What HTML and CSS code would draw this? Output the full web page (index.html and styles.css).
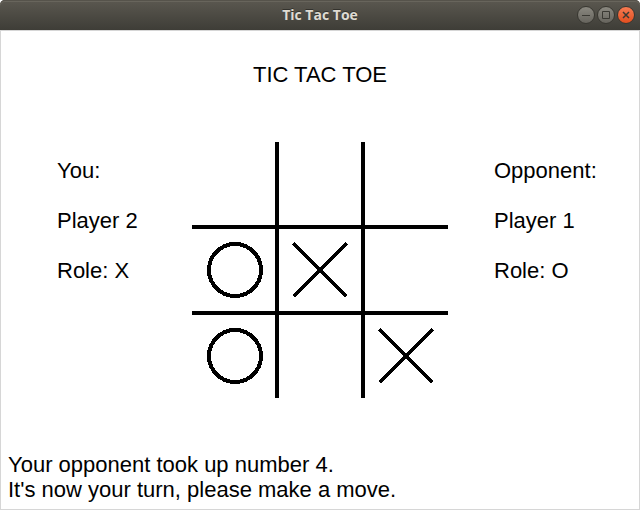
FILE: index.html
```html
<!DOCTYPE html>
<html lang="en">
<head>
<meta charset="utf-8">
<title>Tic Tac Toe</title>
<link rel="stylesheet" href="styles.css">
</head>
<body>
<div class="window">
  <header class="titlebar">
    <span class="caption">Tic Tac Toe</span>
    <div class="controls">
      <button class="control" type="button" aria-label="Minimize">
        <svg viewBox="0 0 18 18"><path d="M5 9.5h8"/></svg>
      </button>
      <button class="control" type="button" aria-label="Maximize">
        <svg viewBox="0 0 18 18"><path d="M5.5 5.5h7v7h-7z"/></svg>
      </button>
      <button class="control close" type="button" aria-label="Close">
        <svg viewBox="0 0 18 18"><path d="M6 6l6 6M12 6l-6 6"/></svg>
      </button>
    </div>
  </header>
  <main class="content">
    <h1 class="title">TIC TAC TOE</h1>
    <div class="game">
      <section class="player you">
        <p>You:</p>
        <p>Player 2</p>
        <p>Role: X</p>
      </section>
      <div class="board">
        <button class="cell" type="button" aria-label="1"></button>
        <button class="cell" type="button" aria-label="2"></button>
        <button class="cell" type="button" aria-label="3"></button>
        <button class="cell" type="button" aria-label="4, O">
          <svg class="mark" viewBox="0 0 56 56"><circle cx="28" cy="28" r="26"/></svg>
        </button>
        <button class="cell" type="button" aria-label="5, X">
          <svg class="mark" viewBox="0 0 56 56"><path d="M1.500 1.500L54.500 54.500M54.500 1.500L1.500 54.500"/></svg>
        </button>
        <button class="cell" type="button" aria-label="6"></button>
        <button class="cell" type="button" aria-label="7, O">
          <svg class="mark" viewBox="0 0 56 56"><circle cx="28" cy="28" r="26"/></svg>
        </button>
        <button class="cell" type="button" aria-label="8"></button>
        <button class="cell" type="button" aria-label="9, X">
          <svg class="mark" viewBox="0 0 56 56"><path d="M1.500 1.500L54.500 54.500M54.500 1.500L1.500 54.500"/></svg>
        </button>
      </div>
      <section class="player opponent">
        <p>Opponent:</p>
        <p>Player 1</p>
        <p>Role: O</p>
      </section>
    </div>
    <div class="status" role="status">
      <p>Your opponent took up number 4.</p>
      <p>It's now your turn, please make a move.</p>
    </div>
  </main>
</div>
</body>
</html>
```
FILE: styles.css
```css
* {
  box-sizing: border-box;
}

body,
h1,
p {
  margin: 0;
}

body {
  background: #fff;
  color: #000;
  font: 22px/25px "Liberation Sans", Arial, sans-serif;
}

.window {
  display: flex;
  flex-direction: column;
  min-height: 100vh;
}

.titlebar {
  display: grid;
  grid-template-columns: 1fr auto 1fr;
  align-items: center;
  height: 30px;
  padding: 0 5px;
  border-radius: 5px 5px 0 0;
  background: linear-gradient(#5b5850, #3e3d37);
  box-shadow: inset 0 1px #56534b, inset 0 2px #68655c;
}

.caption {
  grid-column: 2;
  color: #dfdbd2;
  font: bold 14px/30px "Open Sans", "Noto Sans", sans-serif;
  text-shadow: 0 -1px #33322d;
}

.controls {
  display: flex;
  justify-content: flex-end;
  gap: 2px;
}

.control {
  width: 18px;
  height: 18px;
  padding: 0;
  border: 1px solid #383731;
  border-radius: 50%;
  background: linear-gradient(#8a8880, #66645d);
}

.control svg {
  display: block;
  width: 18px;
  height: 18px;
  margin: -1px;
  fill: none;
  stroke: #3a3933;
}

.close {
  background: linear-gradient(#f67b52, #e24e1f);
}

.close svg {
  stroke-width: 1.5;
}

.content {
  display: flex;
  flex: 1;
  flex-direction: column;
  border: 1px solid #d6d6d6;
}

.title {
  padding-top: 31px;
  font-size: 22px;
  font-weight: normal;
  text-align: center;
}

.game {
  display: grid;
  grid-template-columns: 1fr 256px 1fr;
  padding-top: 55px;
}

.player {
  display: flex;
  flex-direction: column;
  gap: 25px;
  padding-top: 16px;
}

.you {
  padding-left: 56px;
}

.opponent {
  padding-left: 46px;
}

.board {
  display: grid;
  grid-template-columns: repeat(3, 1fr);
  grid-template-rows: repeat(3, 1fr);
  aspect-ratio: 1;
  background:
    linear-gradient(#000, #000) 83px 0 / 4px 100% no-repeat,
    linear-gradient(#000, #000) 169px 0 / 4px 100% no-repeat,
    linear-gradient(#000, #000) 0 83px / 100% 4px no-repeat,
    linear-gradient(#000, #000) 0 169px / 100% 4px no-repeat;
}

.cell {
  display: grid;
  place-items: center;
  padding: 1px 0 0 1px;
  border: 0;
  background: none;
}

.mark {
  width: 56px;
  height: 56px;
  fill: none;
  stroke: #000;
  stroke-width: 4;
  shape-rendering: crispEdges;
}

.status {
  margin-top: auto;
  padding: 0 7px 7px;
}
```
